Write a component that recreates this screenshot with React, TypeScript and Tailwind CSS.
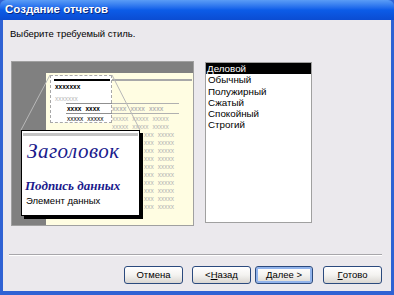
const styles = ["Деловой", "Обычный", "Полужирный", "Сжатый", "Спокойный", "Строгий"];

const topRows = [0, 8];
const sideRows = [16, 24, 32, 40, 48, 56, 64, 72, 80, 88];

function XpButton({ children, primary }: { children: React.ReactNode; primary?: boolean }) {
  return (
    <button
      className={
        primary
          ? "flex h-[18px] w-[58px] items-center justify-center rounded-[3px] border border-[#2b4a7e] bg-gradient-to-b from-white via-[#f4f3f0] to-[#d9d6d2] text-[9.5px] leading-none text-black shadow-[inset_0_0_0_2px_#91b3eb]"
          : "flex h-[18px] w-[59px] items-center justify-center rounded-[3px] border border-[#2b4a7e] bg-gradient-to-b from-white via-[#f4f3f0] to-[#d9d6d2] text-[9.5px] leading-none text-black"
      }
    >
      {children}
    </button>
  );
}

function Preview() {
  return (
    <div className="relative h-[165px] w-[183px] overflow-hidden border border-[#a0a0a0] bg-[#808080] font-['Liberation_Sans',sans-serif]">
      {/* page */}
      <div className="absolute bottom-0 left-[34px] right-0 top-[11px] bg-[#fffde2]" />
      <div className="absolute left-[100px] top-[17px] h-[2px] w-[80px] bg-[#a8a8a8]" />

      {/* detail rows */}
      <div className="absolute left-[54px] top-[41px] h-px w-[113px] bg-[#b0b0b0]" />
      <div className="absolute left-[54px] top-[51px] h-px w-[113px] bg-[#b0b0b0]" />
      <div className="absolute left-[100px] top-[43px] flex gap-[4px] text-[6.5px] font-bold leading-[7px] text-[#b8b8b8]">
        <span>xxxx</span>
        <span>xxxx</span>
        <span>xxxx</span>
      </div>
      {topRows.map((y) => (
        <div
          key={y}
          className="absolute left-[100px] flex gap-[4px] text-[6.5px] leading-[7px] text-[#b4b4b4]"
          style={{ top: 53 + y }}
        >
          <span>xxxxx</span>
          <span>xxxxx</span>
          <span>xxxxx</span>
        </div>
      ))}
      {sideRows.map((y) => (
        <div
          key={y}
          className="absolute left-[132px] flex gap-[4px] text-[6.5px] leading-[7px] text-[#b4b4b4]"
          style={{ top: 53 + y }}
        >
          <span>xxx</span>
          <span>xxxxx</span>
        </div>
      ))}

      {/* zoomed area */}
      <div className="absolute left-[38px] top-[13px] h-[48px] w-[62px] border border-dashed border-[#a8a8a8] bg-white">
        <div className="ml-[3px] mt-[3px] h-[2px] w-[56px] bg-black" />
        <div className="ml-[4px] mt-[2px] text-[6.5px] font-bold leading-[7px] text-black">xxxxxxx</div>
        <div className="ml-[4px] mt-[5px] text-[6.5px] leading-[7px] text-[#b8b8b8]">xxxxxxx</div>
        <div className="ml-[16px] mt-[3px] flex gap-[4px] text-[6.5px] font-bold leading-[7px] text-black">
          <span>xxxx</span>
          <span>xxxx</span>
        </div>
        <div className="ml-[16px] mt-[3px] flex gap-[4px] text-[6.5px] leading-[7px] text-black">
          <span>xxxxx</span>
          <span>xxxxx</span>
        </div>
      </div>
      <div className="absolute left-[54px] top-[41px] h-px w-[46px] bg-[#909090]" />
      <div className="absolute left-[54px] top-[51px] h-px w-[46px] bg-[#909090]" />

      <svg className="absolute left-0 top-0" width="183" height="165">
        <line x1="9" y1="68" x2="38" y2="13" stroke="#b8b8b8" strokeWidth="1" />
        <line x1="128" y1="68" x2="100" y2="13" stroke="#b8b8b8" strokeWidth="1" />
      </svg>

      {/* callout */}
      <div className="absolute left-[9px] top-[68px] h-[86px] w-[119px] border border-black bg-white shadow-[3px_3px_0_0_#000]">
        <div className="mx-[1px] mt-[2px] h-[3px] bg-[#c4c4c4]" />
        <div className="ml-[5px] mt-[4px] font-['Liberation_Serif',serif] text-[21px] italic leading-[22px] tracking-[0.5px] text-[#1a1a8c]">
          Заголовок
        </div>
        <div className="ml-[3px] mt-[17px] font-['Liberation_Serif',serif] text-[13px] font-bold italic leading-[14px] text-[#1a1a8c]">
          Подпись данных
        </div>
        <div className="ml-[4px] mt-[2px] text-[9.5px] leading-[12px] text-black">Элемент данных</div>
      </div>
    </div>
  );
}

export default function App() {
  return (
    <div className="flex h-[295px] w-[394px] flex-col overflow-hidden bg-[#2f62d4] font-['Liberation_Sans',sans-serif]">
      <div className="flex h-[20px] items-center rounded-t-[6px] bg-gradient-to-b from-[#5a9cf6] via-[#0c5ce8] to-[#0b4cd2] pl-[5px]">
        <span className="text-[11.5px] font-bold text-white [text-shadow:1px_1px_0_#0a2a80]">Создание отчетов</span>
      </div>
      <div className="mx-[3px] mb-[4px] flex flex-1 flex-col bg-[#ebe9ed]">
        <div className="ml-[7px] mt-[7px] text-[9.5px] leading-[13px] text-black">Выберите требуемый стиль.</div>
        <div className="ml-[8px] mt-[21px] flex items-start gap-[11px]">
          <Preview />
          <div className="mt-[1px] h-[161px] w-[107px] border border-[#a0a0a0] bg-white">
            {styles.map((s, i) => (
              <div
                key={s}
                className={
                  i === 0
                    ? "h-[11.3px] bg-black pl-[1px] text-[9.8px] leading-[11.3px] text-white"
                    : "h-[11.3px] pl-[2px] text-[9.8px] leading-[11.3px] text-black"
                }
              >
                {s}
              </div>
            ))}
          </div>
        </div>
        <div className="ml-[6px] mt-[28px] h-[2px] w-[373px] border-b border-t border-b-white border-t-[#a7a6aa]" />
        <div className="ml-[121px] mt-[10px] flex">
          <XpButton>Отмена</XpButton>
          <div className="w-[9px]" />
          <XpButton>
            &lt; <span className="underline">Н</span>азад
          </XpButton>
          <div className="w-[4px]" />
          <XpButton primary>
            <span className="underline">Д</span>алее &gt;
          </XpButton>
          <div className="w-[10px]" />
          <XpButton>
            <span className="underline">Г</span>отово
          </XpButton>
        </div>
      </div>
    </div>
  );
}
